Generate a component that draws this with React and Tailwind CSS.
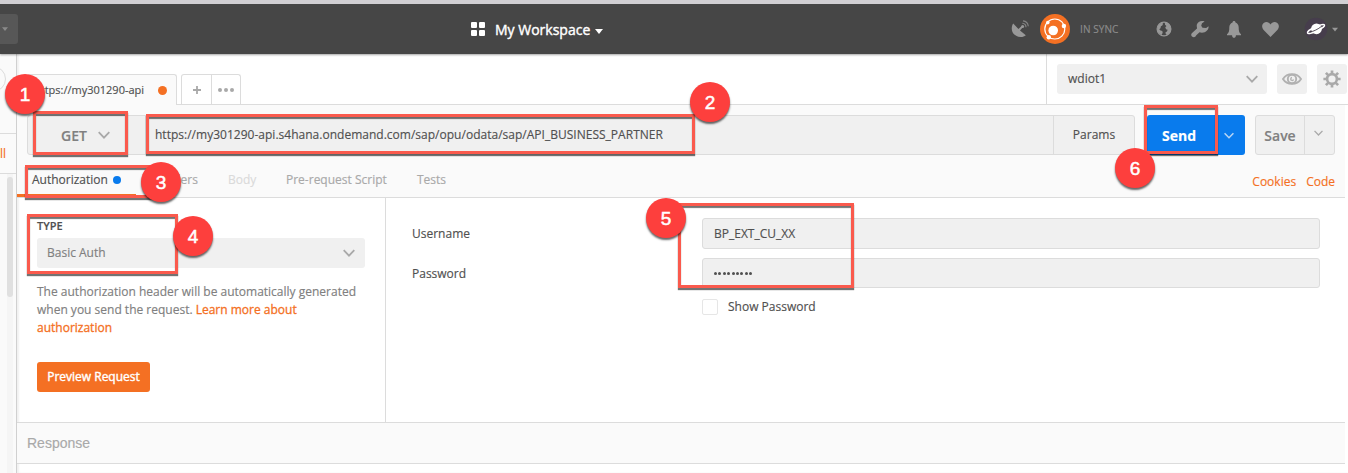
const Chevron = ({ className }) => (
  <svg viewBox="0 0 12 8" fill="none" stroke="currentColor" strokeWidth="1.8" className={className}>
    <path d="M0.7 1.2 6 6.7 11.3 1.2" />
  </svg>
);

const Caret = ({ className }) => (
  <svg viewBox="0 0 8 5" fill="currentColor" className={className}>
    <path d="M0 0H8L4 5Z" />
  </svg>
);

const Satellite = () => (
  <svg viewBox="0 0 18 18" className="size-[18px]" fill="#989898">
    <path d="M2.2 3.600 L7.500 9 L10.600 6 L11.800 7.200 L9 10.500 L14.800 15.300 C12.500 17.600 7 17.800 3.600 14.800 C0.200 11.800 0 6.800 2.200 3.600Z" />
    <circle cx="11.600" cy="6.400" r="1.500" />
    <path d="M11.300 3.300A4 4 0 0 1 15 7.200M12 0.900A6 6 0 0 1 17.300 6.200" fill="none" stroke="#858585" strokeWidth="1.100" />
  </svg>
);

const SyncLogo = () => (
  <svg viewBox="0 0 30 30" className="size-[30px]">
    <circle cx="15" cy="15" r="15" fill="#f47023" />
    <circle cx="14.800" cy="15" r="10" fill="none" stroke="#fff" strokeWidth="1.200" />
    <circle cx="13.200" cy="16.500" r="4.800" fill="#fff" />
    <circle cx="7.800" cy="8.600" r="1.800" fill="#fff" />
    <circle cx="23.900" cy="12" r="2.200" fill="#fff" />
    <circle cx="8.800" cy="23.200" r="2.200" fill="#fff" />
  </svg>
);

const Globe = () => (
  <svg viewBox="0 0 16 16" className="size-4">
    <circle cx="8" cy="8" r="6.900" fill="none" stroke="#989898" strokeWidth="1.200" />
    <path fill="#989898" d="M8.800 1.100C12.500 1.500 15 4.500 15 8 15 10.800 13.500 13 11.300 14.200L9.800 13.200 9.500 11.200 11 10.500 11.600 8.800 10 8.200 9.300 6.200 10.500 5 9 3.800ZM5.500 1.700 7.200 2.600 6.300 4.500 4.900 5.200 4.500 7.200 3.200 8.200 4.500 9.400 6.300 10 6.700 11.800 5.600 13.900C2.800 12.800 1.300 10.800 1.200 8 1.200 5 3 2.700 5.500 1.700Z" />
  </svg>
);

const Wrench = () => (
  <svg viewBox="0 0 18 18" className="size-[18px]" fill="#989898">
    <path d="M13.600 1.400C10.500 0.200 6.600 1.300 5.800 4.800 5.500 6.400 6.200 7.700 6 8.600L0.800 13.200C0 14.200 0 15.600 1 16.500 2 17.500 3.500 17.500 4.500 16.600L5.300 15.200 8.500 12.300C10.800 13.200 14 12.800 16 10.600 17.400 9.100 17.800 7.500 17.500 6.200L15.200 8 11.500 7.800 10.200 5.800 11 3.200Z" />
  </svg>
);

const Bell = () => (
  <svg viewBox="0 0 14 17" className="h-[17px] w-[14px]" fill="#989898">
    <path d="M7 0C8 0 8.500 0.700 8.500 1.500 10.600 2.200 11.700 4.200 11.700 6.500 11.700 10 12 11.500 14 13.300V14.200H0V13.300C2 11.500 2.300 10 2.300 6.500 2.300 4.200 3.400 2.200 5.500 1.500 5.500 0.700 6 0 7 0ZM5 14H9C8.800 16.300 8 16.800 7 16.800 6 16.800 5.200 16.300 5 14Z" />
  </svg>
);

const Heart = () => (
  <svg viewBox="0 0 17 15" className="h-[15px] w-[17px]" fill="#989898">
    <path d="M8.500 15 1.400 7.700C-0.500 5.500-0.200 2.400 1.700 0.900 4-0.700 7.200 0 8.500 2.500 9.800 0 13-0.700 15.300 0.900 17.200 2.400 17.500 5.500 15.600 7.700Z" />
  </svg>
);

const Planet = () => (
  <svg viewBox="0 0 24 24" className="size-6">
    <circle cx="12" cy="12" r="11.300" fill="#463d4c" />
    <circle cx="12.500" cy="11.800" r="5.400" fill="#fff" />
    <ellipse cx="12" cy="12" rx="9.400" ry="2.200" fill="none" stroke="#fff" strokeWidth="1.400" transform="rotate(-25 12 12)" />
    <path d="M6.200 15.700C9.800 15 14.500 12.800 18 9.800" fill="none" stroke="#463d4c" strokeWidth="0.900" transform="translate(-0.300 -0.600)" />
  </svg>
);

const Eye = () => (
  <svg viewBox="0 0 20 12" className="h-3 w-5" fill="none" stroke="#b1b1b1">
    <path d="M1 6C5-0.500 15-0.500 19 6 15 12.500 5 12.500 1 6Z" strokeWidth="1.900" />
    <circle cx="10" cy="6" r="4.200" strokeWidth="1.900" />
    <path d="M10 4.500A1.500 1.500 0 1 0 11.600 6.500" strokeWidth="1.300" />
  </svg>
);

const Gear = () => (
  <svg viewBox="0 0 18 18" className="size-[18px]" fill="none" stroke="#a9a9a9">
    <circle cx="9" cy="9" r="4.900" strokeWidth="2.600" />
    <path strokeWidth="2.700" d="M9 0.400V4M9 14V17.600M0.400 9H4M14 9H17.600M2.900 2.900 5.400 5.400M12.600 12.600 15.100 15.100M2.900 15.100 5.400 12.600M12.600 5.400 15.100 2.900" />
  </svg>
);

const Frame = ({ className }) => (
  <div className={`absolute border-[3px] border-[#fa5a4d] shadow-[0_2px_1px_rgba(0,0,0,.55),inset_0_2px_1px_rgba(0,0,0,.55)] ${className}`} />
);

const Marker = ({ n, className }) => (
  <div className={`absolute flex size-10 items-center justify-center rounded-full bg-[#fd3f3d] font-['Liberation_Sans',sans-serif] text-[19px] leading-none text-white [-webkit-text-stroke:0.5px_white] shadow-[0_2px_2px_rgba(0,0,0,.6)] ${className}`}>
    {n}
  </div>
);

export default function App() {
  return (
    <div className="relative flex h-[473px] w-[1348px] flex-col overflow-hidden bg-white font-['Open_Sans',sans-serif] text-[12px] text-[#505050] [-webkit-text-stroke:0.15px_currentColor]">
      <header className="relative z-10 flex h-[54px] shrink-0 items-center border-t-4 border-[#d1cfd3] bg-[#464646] shadow-[0_1px_2px_rgba(0,0,0,.35)]">
        <div className="flex h-[30px] w-[18px] items-center rounded-r-[3px] bg-[#575757] text-[#8a8a8a]">
          <Caret className="ml-[2px] h-1 w-[6px]" />
        </div>
        <div className="ml-[453px] flex items-center text-white">
          <div className="grid grid-cols-2 gap-[2px]">
            <i className="size-[6px] rounded-[1px] bg-white" />
            <i className="size-[6px] rounded-[1px] bg-white" />
            <i className="size-[6px] rounded-[1px] bg-white" />
            <i className="size-[6px] rounded-[1px] bg-white" />
          </div>
          <span className="ml-[10px] w-[96px] whitespace-nowrap text-[14px] [-webkit-text-stroke:0.4px_white]">My Workspace</span>
          <Caret className="mt-[4px] ml-[4px] h-[5px] w-[8px]" />
        </div>
        <div className="ml-auto flex items-center pr-[10px]">
          <Satellite />
          <span className="ml-[11px]"><SyncLogo /></span>
          <span className="ml-[10px] w-[76px] text-[10px] tracking-[0.1px] text-[#8c8c8c]">IN SYNC</span>
          <Globe />
          <span className="ml-[19px]"><Wrench /></span>
          <span className="ml-[18px]"><Bell /></span>
          <span className="ml-[21px]"><Heart /></span>
          <span className="ml-[25px]"><Planet /></span>
          <Caret className="ml-[4px] h-[5px] w-[6px] text-[#989898]" />
        </div>
      </header>

      <div className="flex min-h-0 flex-1">
        <aside className="flex w-4 shrink-0 flex-col overflow-hidden bg-[#fafafa]">
          <div className="flex h-[80px] shrink-0 items-start border-b border-[#dcdcdc] pt-[12px]">
            <div className="-ml-[20px] size-[26px] shrink-0 rounded-full border border-[#dcdcdc]" />
          </div>
          <div className="flex h-10 shrink-0 items-center border-b border-[#dcdcdc] text-[12px] text-[#f47023]">ll</div>
          <div className="ml-[7px] w-[6px] flex-1 bg-[#f5f5f5] pt-[3px]">
            <div className="h-[120px] rounded-full bg-[#e0e0e0]" />
          </div>
        </aside>

        <main className="z-[1] flex min-w-0 flex-1 flex-col border-l border-[#d0d0d0] bg-white shadow-[inset_2px_0_2px_rgba(0,0,0,.06)]">
          <div className="flex h-[51px] shrink-0 border-b border-[#dcdcdc]">
            <div className="mt-5 -mb-px ml-[10px] flex h-[31px] w-[150px] items-center rounded-t-[3px] border border-b-0 border-[#dcdcdc] bg-[#fafafa]">
              <span className="ml-[6px] w-[124px] text-[11px]">https://my301290-api</span>
              <i className="size-[9px] shrink-0 rounded-full bg-[#f47023]" />
            </div>
            <div className="mt-5 ml-[4px] flex h-[30px] w-[60px] rounded-t-[3px] border border-b-0 border-[#dcdcdc]">
              <div className="flex w-[30px] items-center justify-center border-r border-[#dcdcdc]">
                <svg viewBox="0 0 8 8" className="size-2" stroke="#a9a9a9" strokeWidth="1.800"><path d="M4 0V8M0 4H8" /></svg>
              </div>
              <div className="flex flex-1 items-center justify-center gap-[2px]">
                <i className="size-1 rounded-full bg-[#a9a9a9]" />
                <i className="size-1 rounded-full bg-[#a9a9a9]" />
                <i className="size-1 rounded-full bg-[#a9a9a9]" />
              </div>
            </div>
            <div className="ml-auto flex w-[302px] items-start border-l border-[#dcdcdc] pt-[10px] pl-[10px]">
              <div className="flex h-[30px] w-[210px] items-center justify-between rounded-[3px] bg-[#f0f0f0] pr-[9px] pl-[11px]">
                <span className="text-[12px]">wdiot1</span>
                <Chevron className="h-2 w-3 text-[#a9a9a9]" />
              </div>
              <div className="ml-[10px] flex size-[30px] items-center justify-center rounded-[3px] bg-[#f0f0f0]"><Eye /></div>
              <div className="ml-[10px] flex size-[30px] items-center justify-center rounded-[3px] bg-[#f0f0f0]"><Gear /></div>
            </div>
          </div>

          <div className="mr-[3px] flex h-[93px] shrink-0 flex-col border-b border-[#dcdcdc] bg-[#fafafa] pl-[10px]">
            <div className="mt-[10px] flex h-10 text-[12px]">
              <div className="flex w-[1108px] rounded-[3px] border border-[#dcdcdc] bg-[#f0f0f0]">
                <div className="flex w-[118px] items-center border-r border-[#dcdcdc] text-[#808080]">
                  <span className="ml-[33px] w-[37px] text-[14px] font-semibold">GET</span>
                  <Chevron className="h-2 w-3 text-[#a9a9a9]" />
                </div>
                <div className="flex flex-1 items-center pl-[9px] tracking-[0.013px]">https://my301290-api.s4hana.ondemand.com/sap/opu/odata/sap/API_BUSINESS_PARTNER</div>
                <div className="flex w-[81px] items-center justify-center border-l border-[#dcdcdc]">Params</div>
              </div>
              <div className="ml-3 flex w-[98px] rounded-[3px] bg-[#097bed] text-white">
                <div className="flex w-[68px] items-center justify-center pr-1 text-[14px] font-bold">Send</div>
                <div className="flex flex-1 items-center justify-center border-l border-[#0a6ccd] pr-[3px]"><Chevron className="h-[7px] w-[10px] text-[#b9d5f3]" /></div>
              </div>
              <div className="ml-[10px] flex w-20 rounded-[3px] border border-[#dcdcdc] bg-[#f0f0f0] text-[#808080]">
                <div className="flex w-[49px] items-center justify-center border-r border-[#dcdcdc] text-[14px] font-semibold">Save</div>
                <div className="flex flex-1 items-center justify-center pr-[3px] pb-1"><Chevron className="h-[6px] w-[9px] text-[#a9a9a9]" /></div>
              </div>
            </div>
            <nav className="-ml-[10px] flex h-[42px] items-stretch text-[#a9a9a9]">
              <div className="flex w-[119px] items-center border-b-[3px] border-[#f47023] pt-[15px] pb-[4px] pl-[15px] text-[#505050]">
                <span className="w-[81px]">Authorization</span>
                <i className="size-2 shrink-0 rounded-full bg-[#097bed]" />
              </div>
              <div className="flex flex-1 items-center pt-[15px] pb-[7px]">
                <span className="ml-[15px] w-[77px]">Headers</span>
                <span className="w-[58px] text-[#dadada]">Body</span>
                <span className="w-[131px]">Pre-request Script</span>
                <span>Tests</span>
                <span className="mt-[3px] ml-auto text-[#f47023]">Cookies</span>
                <span className="mt-[3px] mr-[10px] ml-[10px] text-[#f47023]">Code</span>
              </div>
            </nav>
          </div>

          <div className="flex h-[224px] shrink-0">
            <section className="flex w-[369px] flex-col items-start border-r border-[#dcdcdc] pt-[20px] pl-[20px]">
              <h2 className="text-[11px] leading-4 font-semibold">TYPE</h2>
              <div className="mt-[4px] flex h-[30px] w-[328px] items-center justify-between rounded-[3px] bg-[#f0f0f0] pr-[10px] pl-[10px] text-[#808080]">
                Basic Auth
                <Chevron className="h-2 w-3 text-[#a9a9a9]" />
              </div>
              <p className="mt-[15px] leading-[18px] whitespace-nowrap text-[#808080]">
                The authorization header will be automatically generated<br />
                when you send the request. <a className="text-[#f47023] [-webkit-text-stroke:0.3px_#f47023]">Learn more about<br />authorization</a>
              </p>
              <button className="mt-[25px] h-[30px] w-[113px] rounded-[3px] bg-[#f47023] whitespace-nowrap text-white [-webkit-text-stroke:0.4px_white]">Preview Request</button>
            </section>
            <section className="flex flex-1 flex-col pt-[20px] pl-[26px]">
              <div className="flex h-[31px] items-center">
                <label className="w-[290px]">Username</label>
                <div className="flex h-[31px] w-[618px] items-center rounded-[3px] border border-[#dcdcdc] bg-[#f0f0f0] pl-[11px]">BP_EXT_CU_XX</div>
              </div>
              <div className="mt-[9px] flex h-[30px] items-center">
                <label className="w-[290px] pt-[2px]">Password</label>
                <div className="flex h-[30px] w-[618px] items-center gap-[1.400px] rounded-[3px] border border-[#dcdcdc] bg-[#f0f0f0] pl-[11px]">
                  {Array.from({ length: 9 }, (_, i) => <i key={i} className="size-[3px] rounded-full bg-[#505050]" />)}
                </div>
              </div>
              <div className="mt-[10px] ml-[290px] flex items-center">
                <i className="size-4 rounded-[2px] border border-[#e6e6e6]" />
                <span className="ml-[10px]">Show Password</span>
              </div>
            </section>
          </div>

          <div className="mr-[3px] flex h-[42px] shrink-0 items-center border-y border-[#dcdcdc] bg-[#fafafa] pl-[10px] font-['Liberation_Sans',sans-serif] text-[14px] text-[#a9a9a9]">Response</div>
        </main>
      </div>

      <div className="pointer-events-none absolute inset-0 z-20">
        <Frame className="top-[111px] left-[33px] h-[44px] w-[95px]" />
        <Frame className="top-[114px] left-[146px] h-[40px] w-[549px]" />
        <Frame className="top-[165px] left-[25px] h-[33px] w-[130px]" />
        <Frame className="top-[214px] left-[27px] h-[60px] w-[151px]" />
        <Frame className="top-[203px] left-[678px] h-[85px] w-[176px]" />
        <Frame className="top-[105px] left-[1144px] h-[49px] w-[74px]" />
        <Marker n="1" className="top-[74px] left-[5px]" />
        <Marker n="2" className="top-[82px] left-[690px]" />
        <Marker n="3" className="top-[162px] left-[141px]" />
        <Marker n="4" className="top-[216px] left-[173px]" />
        <Marker n="5" className="top-[198px] left-[646px]" />
        <Marker n="6" className="top-[148px] left-[1115px]" />
      </div>
    </div>
  );
}
